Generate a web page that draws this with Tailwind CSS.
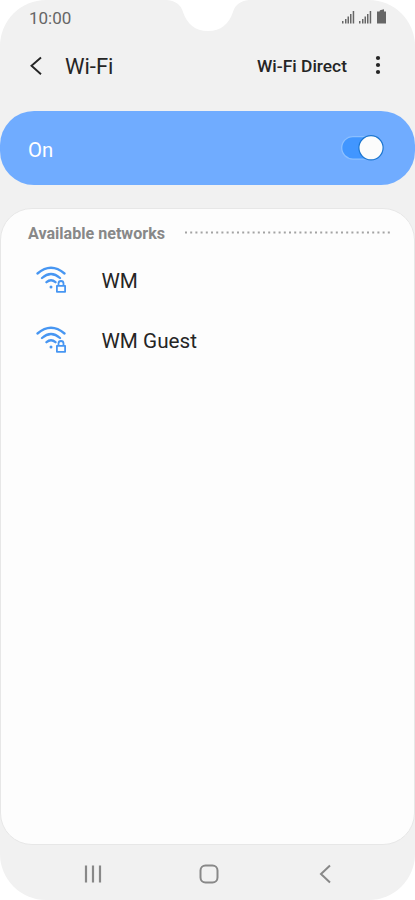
<!DOCTYPE html>
<html lang="en">
<head>
<meta charset="utf-8">
<title>Wi-Fi</title>
<script src="https://cdn.jsdelivr.net/npm/@tailwindcss/browser@4"></script>
</head>
<body class="bg-white font-['Roboto',sans-serif]">
<div class="relative flex h-[900px] w-[415px] flex-col overflow-hidden rounded-[46px] bg-[#f1f1f1] text-[#252525]">
  <svg class="absolute left-[164px] top-0" width="88" height="32" viewBox="0 0 88 32"><path d="M3 0C12 1 17 5 19 12C23 24 31 31 44 31C57 31 65 24 69 12C71 5 76 1 85 0Z" fill="#fff"/></svg>

  <header class="flex h-[35px] shrink-0 items-center justify-between pl-[29px] pr-[27px] text-[17px] text-[#666]">
    <span class="pt-px leading-[35px]">10:00</span>
    <svg class="mb-px" width="46" height="16" viewBox="0 0 46 16" fill="#666">
      <path d="M0 12h1.500v2.500H0zM3 10h1.500v4.500H3zM5.500 7.500H7v7H5.500zM8 5h1.500v9.500H8zM10.700 2h1.500v12.500h-1.500z"/>
      <path d="M17 12h1.500v2.500H17zM20 10h1.500v4.500H20zM22.500 7.500H24v7h-1.500zM25 5h1.500v9.500H25zM27.700 2h1.500v12.500h-1.500z"/>
      <path d="M35 2.500h2.500l.5-1.200L42 .3v2.200h2v12h-9z"/>
    </svg>
  </header>

  <div class="flex h-[61px] shrink-0 items-center pl-[29px] pr-[33px]">
    <svg width="15" height="20" viewBox="0 0 15 20" fill="none" stroke="#252525" stroke-width="1.900"><path d="M12 1.500L2.500 9.800L12 18.200"/></svg>
    <h1 class="ml-[21px] pt-[2px] text-[22px]">Wi-Fi</h1>
    <span class="ml-auto pt-px text-[17.400px] font-medium">Wi-Fi Direct</span>
    <svg class="mb-px ml-[27px]" width="8" height="20" viewBox="0 0 8 20" fill="#252525"><circle cx="4" cy="3" r="2.100"/><circle cx="4" cy="10" r="2.100"/><circle cx="4" cy="17" r="2.100"/></svg>
  </div>

  <div class="mt-[15.400px] flex h-[74px] shrink-0 items-center justify-between rounded-[34px] bg-[#70acff] pl-7 pr-[30px] text-white">
    <span class="pt-[3px] text-[20.300px]">On</span>
    <svg width="44" height="26" viewBox="0 0 44 26"><rect x=".7" y="1.600" width="40" height="22.500" rx="11.250" fill="#4196ff" stroke="#8bbfff" stroke-width="1.300"/><circle cx="30" cy="12.800" r="12.100" fill="#fcfcfc" stroke="#1d77d0" stroke-width="1.200"/></svg>
  </div>

  <main class="mt-[22.600px] h-[637px] shrink-0 rounded-[32px] border border-[#e7e7e7] bg-[#fdfdfd] pt-[9px]">
    <div class="flex h-8 items-center pl-[27px]">
      <h2 class="w-[156px] whitespace-nowrap text-[16.100px] font-bold text-[#888]">Available networks</h2>
      <svg class="mb-[2px]" width="206" height="3" viewBox="0 0 206 3"><path d="M1 1.500H206" stroke="#a3a3a3" stroke-width="2" stroke-dasharray="2 3.200"/></svg>
    </div>
    <ul class="text-[20.700px]">
      <li class="flex h-[60px] items-center pl-[35px]">
        <svg class="mr-[34.500px]" width="31" height="28" viewBox="0 0 31 28" fill="none" stroke="#4796f2" stroke-width="2.300" stroke-linecap="round"><path d="M1.500 7.500Q15 -4 28.500 7.500M6 12Q15 4 24 12M10.500 16.200Q15 12.200 19.500 16.200"/><circle cx="15" cy="21" r="1.500" fill="#4796f2" stroke="none"/><path d="M20.900 20h8.200v5.800h-8.200zM22.500 20v-2.300a2.500 2.500 0 0 1 5 0V20" stroke="#fdfdfd" stroke-width="3.600"/><path d="M20.900 19.800h8.200v6h-8.200zM22.500 19.500v-2a2.500 2.500 0 0 1 5 0v2" stroke-width="1.800" stroke-linejoin="round"/></svg>
        <span class="pt-[3px]">WM</span>
      </li>
      <li class="flex h-[60px] items-center pl-[35px]">
        <svg class="mr-[34.500px]" width="31" height="28" viewBox="0 0 31 28" fill="none" stroke="#4796f2" stroke-width="2.300" stroke-linecap="round"><path d="M1.500 7.500Q15 -4 28.500 7.500M6 12Q15 4 24 12M10.500 16.200Q15 12.200 19.500 16.200"/><circle cx="15" cy="21" r="1.500" fill="#4796f2" stroke="none"/><path d="M20.900 20h8.200v5.800h-8.200zM22.500 20v-2.300a2.500 2.500 0 0 1 5 0V20" stroke="#fdfdfd" stroke-width="3.600"/><path d="M20.900 19.800h8.200v6h-8.200zM22.500 19.500v-2a2.500 2.500 0 0 1 5 0v2" stroke-width="1.800" stroke-linejoin="round"/></svg>
        <span class="pt-[3px]">WM Guest</span>
      </li>
    </ul>
  </main>

  <nav class="flex h-[57px] items-center pl-[84px] pt-[3px]">
    <svg width="18" height="20" viewBox="0 0 18 20" stroke="#888" stroke-width="2.200"><path d="M2 1.500v17M9 1.500v17M16 1.500v17"/></svg>
    <svg class="ml-[97px]" width="20" height="20" viewBox="0 0 20 20" fill="none" stroke="#888" stroke-width="2"><rect x="1.500" y="1.500" width="17" height="17" rx="5"/></svg>
    <svg class="ml-[100px]" width="12" height="20" viewBox="0 0 12 20" fill="none" stroke="#888" stroke-width="2"><path d="M11 1.500L2 10L11 18.500"/></svg>
  </nav>
</div>
</body>
</html>
